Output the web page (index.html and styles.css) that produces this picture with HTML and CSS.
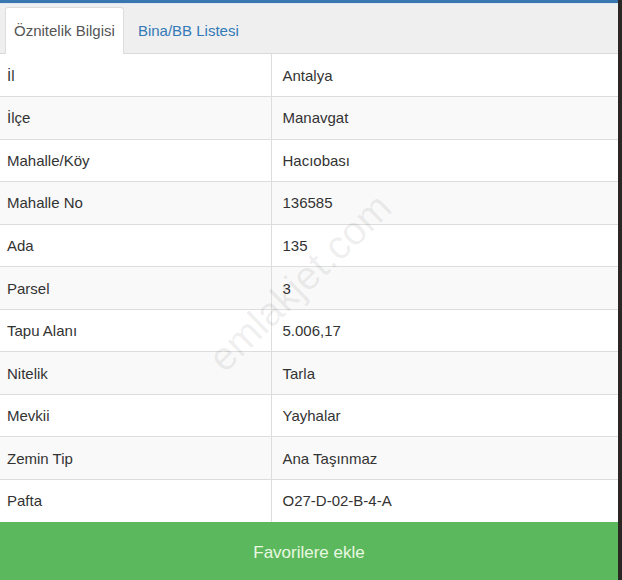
FILE: index.html
```html
<!DOCTYPE html>
<html lang="tr">
<head>
  <meta charset="UTF-8">
  <meta name="viewport" content="width=device-width, initial-scale=1.0">
  <title>Öznitelik Bilgisi</title>
  <link rel="stylesheet" href="styles.css">
</head>
<body>

  <div class="panel">
    <ul class="tabs">
      <li class="tab active">Öznitelik Bilgisi</li>
      <li class="tab">Bina/BB Listesi</li>
    </ul>

    <div class="content">
      <table class="info">
        <tr><td>İl</td><td>Antalya</td></tr>
        <tr><td>İlçe</td><td>Manavgat</td></tr>
        <tr><td>Mahalle/Köy</td><td>Hacıobası</td></tr>
        <tr><td>Mahalle No</td><td>136585</td></tr>
        <tr><td>Ada</td><td>135</td></tr>
        <tr><td>Parsel</td><td>3</td></tr>
        <tr><td>Tapu Alanı</td><td>5.006,17</td></tr>
        <tr><td>Nitelik</td><td>Tarla</td></tr>
        <tr><td>Mevkii</td><td>Yayhalar</td></tr>
        <tr><td>Zemin Tip</td><td>Ana Taşınmaz</td></tr>
        <tr><td>Pafta</td><td>O27-D-02-B-4-A</td></tr>
      </table>
      <div class="watermark">emlakjet.com</div>
    </div>

    <button class="fav">Favorilere ekle</button>
  </div>

</body>
</html>
```

FILE: styles.css
```css
body {
  margin: 0;
  background: #2a2724;
  font-family: "Liberation Sans", Arial, sans-serif;
  color: #333;
  font-size: 15px;
}

.panel {
  width: 618px;
  height: 580px;
  background: #fff;
  border-top: 3px solid #3a77b0;
  box-sizing: border-box;
  display: flex;
  flex-direction: column;
}

.tabs {
  list-style: none;
  margin: 0;
  padding: 4px 0 0 5px;
  height: 51px;
  box-sizing: border-box;
  background: #efefef;
  border-top: 1px solid #dde8f0;
  border-bottom: 1px solid #d9d9d9;
  display: flex;
  align-items: flex-end;
}

.tab {
  height: 46px;
  line-height: 46px;
  padding: 0 8px;
  margin-bottom: -1px;
  color: #337ab7;
  border: 1px solid transparent;
  border-bottom: none;
}

.tab + .tab {
  margin-left: 5px;
}

.tab.active {
  background: #fff;
  color: #555;
  border-color: #dddddd;
  border-radius: 3px 3px 0 0;
}

.content {
  position: relative;
  overflow: hidden;
}

.info {
  width: 100%;
  border-collapse: collapse;
}

.info td {
  height: 42.55px;
  padding: 0 7px;
  border-top: 1px solid #dddddd;
  box-sizing: border-box;
}

.info tr:first-child td {
  border-top: none;
}

.info td:first-child {
  width: 271px;
  border-right: 1px solid #dddddd;
}

.info td:last-child {
  padding-left: 11px;
}

.info tr:nth-child(even) td {
  background: #f9f9f9;
}

.watermark {
  position: absolute;
  left: 182px;
  top: 206px;
  font-size: 40px;
  color: rgba(0, 0, 0, 0.07);
  transform: rotate(-44deg);
  pointer-events: none;
}

.fav {
  flex: 1;
  padding-top: 4px;
  border: none;
  background: #5cb85c;
  color: #e9f8e2;
  font-family: "Liberation Sans", Arial, sans-serif;
  font-size: 17px;
  cursor: pointer;
}
```
